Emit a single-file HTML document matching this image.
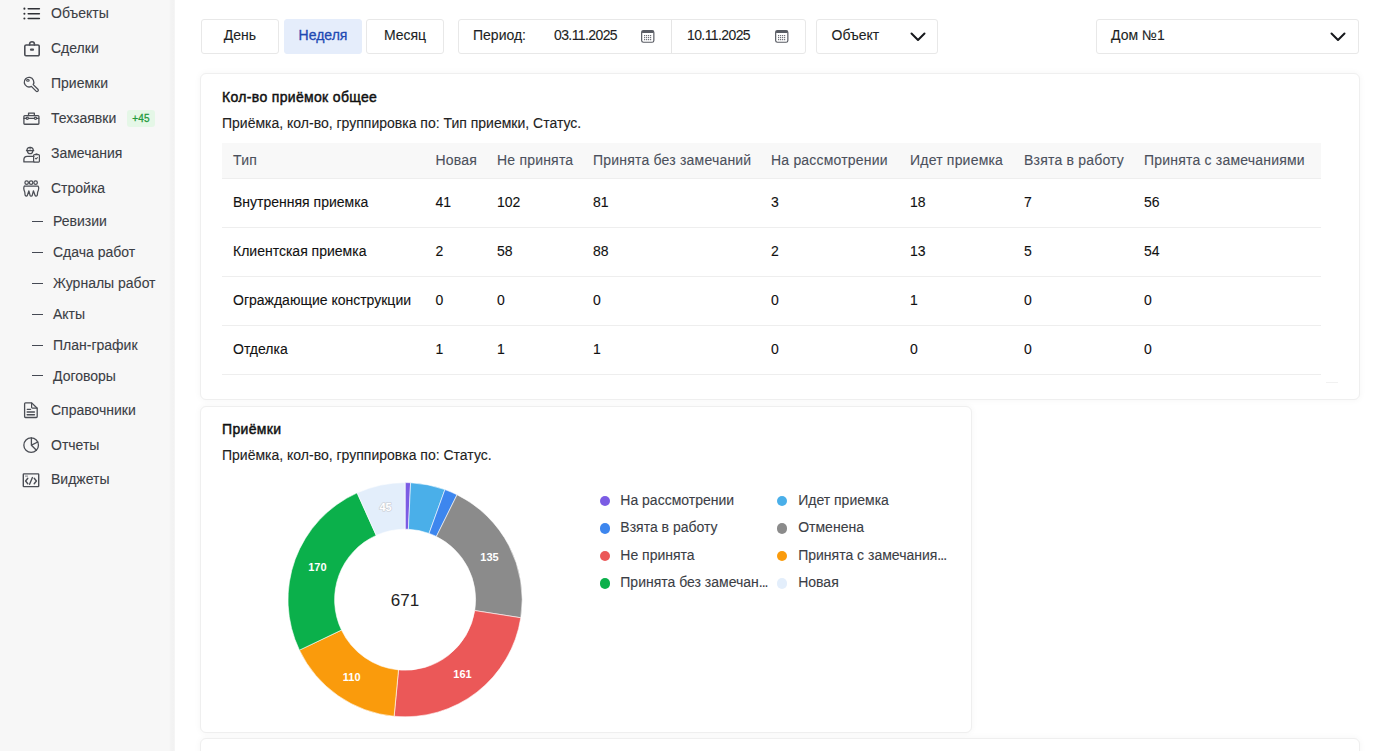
<!DOCTYPE html>
<html><head><meta charset="utf-8">
<style>
*{box-sizing:border-box;margin:0;padding:0}
html,body{width:1400px;height:751px;overflow:hidden;background:#fff;font-family:"Liberation Sans",sans-serif;color:#1d1f24}
#side{position:absolute;left:0;top:0;width:175px;height:751px;background:linear-gradient(to right,#f7f7f7 0,#f7f7f7 169px,#f3f3f3 171px,#f2f2f2 174px,#f8f8f8 175px)}
.t{position:absolute;font-size:14px;line-height:16px;white-space:nowrap;-webkit-text-stroke:0.1px currentColor}
.si{color:#3b3e45}
.ic{position:absolute;overflow:visible}
.dash{position:absolute;left:32px;width:11px;height:1px;background:#454954}
.box{position:absolute;top:19px;height:35px;border:1px solid #e8e8e8;border-radius:3px;background:#fff}
.btn{font-size:14px;line-height:33px;text-align:center;color:#1d1f24}
.card{position:absolute;background:#fff;border-radius:6px;border:1px solid #efefef;box-shadow:0 0 7px rgba(0,0,0,0.045)}
.title{font-weight:normal;color:#111;-webkit-text-stroke:0.45px #111;letter-spacing:0.33px}
.subt{color:#222}
.th{color:#4b505c;letter-spacing:0.2px}
.td{color:#111}
.rowline{position:absolute;left:222px;width:1099px;height:1px;background:#eeeeee}
.lg{color:#3b3e45}
.dot{position:absolute;width:10.5px;height:10.5px;border-radius:50%}
</style></head><body>
<div id="side"></div>
<div class="t si" style="left:51px;top:4.95px;">Объекты</div>
<div class="t si" style="left:51px;top:40.25px;">Сделки</div>
<div class="t si" style="left:51px;top:75.15px;">Приемки</div>
<div class="t si" style="left:51px;top:109.75px;">Техзаявки</div>
<div class="t si" style="left:51px;top:145.15px;">Замечания</div>
<div class="t si" style="left:51px;top:179.75px;">Стройка</div>
<div class="t si" style="left:51px;top:401.65px;">Справочники</div>
<div class="t si" style="left:51px;top:436.75px;">Отчеты</div>
<div class="t si" style="left:51px;top:470.75px;">Виджеты</div>
<div class="t si" style="left:53px;top:213.05px;">Ревизии</div>
<div class="dash" style="top:221px"></div>
<div class="t si" style="left:53px;top:244.05px;">Сдача работ</div>
<div class="dash" style="top:252px"></div>
<div class="t si" style="left:53px;top:275.05px;">Журналы работ</div>
<div class="dash" style="top:283px"></div>
<div class="t si" style="left:53px;top:306.35px;">Акты</div>
<div class="dash" style="top:314px"></div>
<div class="t si" style="left:53px;top:337.35px;">План-график</div>
<div class="dash" style="top:345px"></div>
<div class="t si" style="left:53px;top:367.95px;">Договоры</div>
<div class="dash" style="top:375px"></div>
<div style="position:absolute;left:127px;top:110px;width:28px;height:17px;border-radius:3px;background:#e5f7e7;"></div><div style="position:absolute;left:127px;top:110.3px;width:28px;height:17px;color:#1f9a3b;font-size:10px;line-height:17px;text-align:center;-webkit-text-stroke:0.3px #1f9a3b;letter-spacing:0.2px">+45</div>
<svg style="position:absolute;left:0;top:0" width="175" height="500"><circle cx="24.4" cy="8.65" r="1.05" fill="#2f3136"/><path d="M28.2 8.65H39.4" stroke="#2f3136" stroke-width="1.5" stroke-linecap="round"/><circle cx="24.4" cy="13.7" r="1.05" fill="#2f3136"/><path d="M28.2 13.7H39.4" stroke="#2f3136" stroke-width="1.5" stroke-linecap="round"/><circle cx="24.4" cy="18.5" r="1.05" fill="#2f3136"/><path d="M28.2 18.5H39.4" stroke="#2f3136" stroke-width="1.5" stroke-linecap="round"/><path d="M26.2 45H38a1.2 1.2 0 0 1 1.2 1.2v8.3a1.2 1.2 0 0 1-1.2 1.2H26a1.2 1.2 0 0 1-1.2-1.2v-8.3a1.4 1.4 0 0 1 1.4-1.2z" fill="none" stroke="#4b4e55" stroke-width="1.6" stroke-linecap="round" stroke-linejoin="round"/><path d="M29.6 44.9v-0.8a2.4 2.4 0 0 1 4.8 0v0.8" fill="none" stroke="#4b4e55" stroke-width="1.6" stroke-linecap="round" stroke-linejoin="round"/><path d="M31 49.7H33" fill="none" stroke="#4b4e55" stroke-width="2.2" stroke-linecap="round" stroke-linejoin="round"/><path d="M33.19 84.59A4.8 4.8 0 1 0 31.35 86.39L36.08 91.12A1.3 1.3 0 0 0 37.92 89.28Z" fill="none" stroke="#4b4e55" stroke-width="1.3" stroke-linecap="round" stroke-linejoin="round"/><ellipse cx="27.9" cy="80.4" rx="1.3" ry="0.9" fill="none" stroke="#4b4e55" stroke-width="1.1"/><path d="M24.9 115.65H38.1a0.8 0.8 0 0 1 0.8 0.8v7a0.8 0.8 0 0 1-0.8 0.8H24.7a0.8 0.8 0 0 1-0.8-0.8v-7a0.8 0.8 0 0 1 0.8-0.8z" fill="none" stroke="#4b4e55" stroke-width="1.3" stroke-linecap="round" stroke-linejoin="round"/><path d="M28.55 115.6V113.1H34.35V115.6" fill="none" stroke="#4b4e55" stroke-width="1.3" stroke-linecap="round" stroke-linejoin="round"/><path d="M23.9 118.3H26.2M28.4 118.3H34.4M36.6 118.3H38.9" fill="none" stroke="#4b4e55" stroke-width="1.2" stroke-linecap="round" stroke-linejoin="round"/><circle cx="27.3" cy="118.3" r="1.1" fill="none" stroke="#4b4e55" stroke-width="1.2"/><circle cx="35.5" cy="118.3" r="1.1" fill="none" stroke="#4b4e55" stroke-width="1.2"/><path d="M26.9 150.6a3.2 3.3 0 0 1 6.4 0" fill="none" stroke="#4b4e55" stroke-width="1.3" stroke-linecap="round" stroke-linejoin="round"/><path d="M26.5 150.7H33.7" fill="none" stroke="#4b4e55" stroke-width="1.3" stroke-linecap="round" stroke-linejoin="round"/><path d="M30.1 147.3V149" fill="none" stroke="#4b4e55" stroke-width="1.1" stroke-linecap="round" stroke-linejoin="round"/><path d="M27.6 151.2a2.5 2.5 0 0 0 5 0" fill="none" stroke="#4b4e55" stroke-width="1.3" stroke-linecap="round" stroke-linejoin="round"/><path d="M33.9 156.4H27.1a3.2 3.2 0 0 0-3.2 3.2V161.9H33.9" fill="none" stroke="#4b4e55" stroke-width="1.3" stroke-linecap="round" stroke-linejoin="round"/><path d="M34.4 154.6h4.2a0.8 0.8 0 0 1 0.8 0.8v5.9a0.8 0.8 0 0 1-0.8 0.8h-4.2a0.8 0.8 0 0 1-0.8-0.8v-5.9a0.8 0.8 0 0 1 0.8-0.8z" fill="none" stroke="#4b4e55" stroke-width="1.2" stroke-linecap="round" stroke-linejoin="round"/><path d="M35.6 154.4V153.9H37.4V154.4" fill="none" stroke="#4b4e55" stroke-width="1.0" stroke-linecap="round" stroke-linejoin="round"/><path d="M35.4 158.4l0.8 0.6l1.2-1.3" fill="none" stroke="#4b4e55" stroke-width="1.1" stroke-linecap="round" stroke-linejoin="round"/><circle cx="26.65" cy="182.7" r="1.75" fill="none" stroke="#4b4e55" stroke-width="1.25"/><circle cx="31.1" cy="182.7" r="1.75" fill="none" stroke="#4b4e55" stroke-width="1.25"/><circle cx="35.6" cy="182.7" r="1.75" fill="none" stroke="#4b4e55" stroke-width="1.25"/><path d="M24.5 186.1H38.1C39.2 187.5 38.6 190 37.6 192.2L37.3 195.2A1.2 1.2 0 0 1 35 195.3L33.4 190.8L32.3 195.2A1.2 1.2 0 0 1 30 195.2L28.9 190.8L27.4 195.3A1.2 1.2 0 0 1 25.1 195.2L24.8 192.2C23.8 190 23.3 187.5 24.5 185.9Z" fill="none" stroke="#4b4e55" stroke-width="1.25" stroke-linecap="round" stroke-linejoin="round"/><path d="M25.5 402.9H31.7L37.2 408.2V416.6a0.9 0.9 0 0 1-0.9 0.9H25.5a0.9 0.9 0 0 1-0.9-0.9V403.8a0.9 0.9 0 0 1 0.9-0.9z" fill="none" stroke="#4b4e55" stroke-width="1.3" stroke-linecap="round" stroke-linejoin="round"/><path d="M31.6 403.1V407.3a0.8 0.8 0 0 0 0.8 0.8H37" fill="none" stroke="#4b4e55" stroke-width="1.2" stroke-linecap="round" stroke-linejoin="round"/><path d="M27.2 409.3H30.6" fill="none" stroke="#4b4e55" stroke-width="1.2" stroke-linecap="round" stroke-linejoin="round"/><path d="M27.2 412H34.4M27.2 414.8H34.4" fill="none" stroke="#4b4e55" stroke-width="1.5" stroke-linecap="round" stroke-linejoin="round"/><circle cx="31.15" cy="445.15" r="7.3" fill="none" stroke="#4b4e55" stroke-width="1.3"/><path d="M31.4 437.9V445.2L36.4 450.3M31.4 445.2L37.8 442" fill="none" stroke="#4b4e55" stroke-width="1.3" stroke-linecap="round" stroke-linejoin="round"/><path d="M23.9 473.9H38.1a0.6 0.6 0 0 1 0.6 0.6V486a0.6 0.6 0 0 1-0.6 0.6H23.9a0.6 0.6 0 0 1-0.6-0.6V474.5a0.6 0.6 0 0 1 0.6-0.6z" fill="none" stroke="#4b4e55" stroke-width="1.4" stroke-linecap="round" stroke-linejoin="round"/><path d="M27.8 478.2L25.6 481L27.8 483.8M34.2 478.2L36.4 481L34.2 483.8M32.4 477.6L29.6 484.3" fill="none" stroke="#4b4e55" stroke-width="1.4" stroke-linecap="round" stroke-linejoin="round"/><path d="M25.4 476.1H27.6" fill="none" stroke="#4b4e55" stroke-width="0.7" stroke-linecap="round" stroke-linejoin="round"/></svg>
<div class="box" style="left:201px;width:78px"></div>
<div class="box" style="left:284px;width:78px;background:#e5edfb;border-color:#e5edfb"></div>
<div class="box" style="left:366px;width:78px"></div>
<div class="t" style="left:201px;width:78px;text-align:center;top:26.95px;color:#1d1f24">День</div>
<div class="t" style="left:284px;width:78px;text-align:center;top:26.95px;color:#2149b3;-webkit-text-stroke:0.3px #2149b3">Неделя</div>
<div class="t" style="left:366px;width:78px;text-align:center;top:26.95px;color:#1d1f24">Месяц</div>
<div class="box" style="left:458px;width:348px"></div>
<div style="position:absolute;left:671px;top:20px;width:1px;height:33px;background:#e5e5e5"></div>
<div class="t " style="left:473px;top:27.05px;color:#1d1f24">Период:</div>
<div class="t " style="left:554px;top:27.05px;color:#1d1f24;letter-spacing:-0.6px">03.11.2025</div>
<div class="t " style="left:687px;top:27.05px;color:#1d1f24;letter-spacing:-0.6px">10.11.2025</div>
<svg class="ic" style="left:641px;top:30px" width="15" height="13" viewBox="0 0 15 13"><rect x="0.65" y="0.65" width="12.2" height="11.6" rx="1.8" fill="#fff" stroke="#595c64" stroke-width="1.2"/><rect x="0.65" y="0.65" width="12.2" height="2.4" rx="1.2" fill="#595c64"/><rect x="3" y="5" width="1.2" height="1.2" fill="#6e7178"/><rect x="3" y="7" width="1.2" height="1.2" fill="#6e7178"/><rect x="3" y="9" width="1.2" height="1.2" fill="#6e7178"/><rect x="5" y="5" width="1.2" height="1.2" fill="#6e7178"/><rect x="5" y="7" width="1.2" height="1.2" fill="#6e7178"/><rect x="5" y="9" width="1.2" height="1.2" fill="#6e7178"/><rect x="7" y="5" width="1.2" height="1.2" fill="#6e7178"/><rect x="7" y="7" width="1.2" height="1.2" fill="#6e7178"/><rect x="7" y="9" width="1.2" height="1.2" fill="#6e7178"/><rect x="9" y="5" width="1.2" height="1.2" fill="#6e7178"/><rect x="9" y="7" width="1.2" height="1.2" fill="#6e7178"/><rect x="9" y="9" width="1.2" height="1.2" fill="#6e7178"/></svg>
<svg class="ic" style="left:775px;top:30px" width="15" height="13" viewBox="0 0 15 13"><rect x="0.65" y="0.65" width="12.2" height="11.6" rx="1.8" fill="#fff" stroke="#595c64" stroke-width="1.2"/><rect x="0.65" y="0.65" width="12.2" height="2.4" rx="1.2" fill="#595c64"/><rect x="3" y="5" width="1.2" height="1.2" fill="#6e7178"/><rect x="3" y="7" width="1.2" height="1.2" fill="#6e7178"/><rect x="3" y="9" width="1.2" height="1.2" fill="#6e7178"/><rect x="5" y="5" width="1.2" height="1.2" fill="#6e7178"/><rect x="5" y="7" width="1.2" height="1.2" fill="#6e7178"/><rect x="5" y="9" width="1.2" height="1.2" fill="#6e7178"/><rect x="7" y="5" width="1.2" height="1.2" fill="#6e7178"/><rect x="7" y="7" width="1.2" height="1.2" fill="#6e7178"/><rect x="7" y="9" width="1.2" height="1.2" fill="#6e7178"/><rect x="9" y="5" width="1.2" height="1.2" fill="#6e7178"/><rect x="9" y="7" width="1.2" height="1.2" fill="#6e7178"/><rect x="9" y="9" width="1.2" height="1.2" fill="#6e7178"/></svg>
<div class="box" style="left:816px;width:122px"></div>
<div class="t " style="left:831.5px;top:27.05px;color:#1d1f24">Объект</div>
<svg class="ic" style="left:909.5px;top:31.5px" width="16" height="10" viewBox="0 0 16 10" fill="none" stroke="#16181c" stroke-width="2" stroke-linecap="round" stroke-linejoin="round"><path d="M1.5 1.5L8 8l6.5-6.5"/></svg>
<div class="box" style="left:1096px;width:263px"></div>
<div class="t " style="left:1111px;top:27.05px;color:#1d1f24">Дом №1</div>
<svg class="ic" style="left:1329.5px;top:31.5px" width="16" height="10" viewBox="0 0 16 10" fill="none" stroke="#16181c" stroke-width="2" stroke-linecap="round" stroke-linejoin="round"><path d="M1.5 1.5L8 8l6.5-6.5"/></svg>
<div class="card" style="left:200px;top:73px;width:1160px;height:327px"></div>
<div class="t title" style="left:222px;top:88.95px;">Кол-во приёмок общее</div>
<div class="t subt" style="left:222px;top:114.95px;">Приёмка, кол-во, группировка по: Тип приемки, Статус.</div>
<div style="position:absolute;left:222px;top:143px;width:1099px;height:36px;background:#f8f8f8;border-bottom:1px solid #eeeeee"></div>
<div class="t th" style="left:233px;top:151.55px;">Тип</div>
<div class="t th" style="left:435.5px;top:151.55px;">Новая</div>
<div class="t th" style="left:497px;top:151.55px;">Не принята</div>
<div class="t th" style="left:593px;top:151.55px;">Принята без замечаний</div>
<div class="t th" style="left:771px;top:151.55px;">На рассмотрении</div>
<div class="t th" style="left:910px;top:151.55px;">Идет приемка</div>
<div class="t th" style="left:1024px;top:151.55px;">Взята в работу</div>
<div class="t th" style="left:1144px;top:151.55px;">Принята с замечаниями</div>
<div class="t td" style="left:233px;top:193.65px;">Внутренняя приемка</div>
<div class="t td" style="left:435.5px;top:193.65px;">41</div>
<div class="t td" style="left:497px;top:193.65px;">102</div>
<div class="t td" style="left:593px;top:193.65px;">81</div>
<div class="t td" style="left:771px;top:193.65px;">3</div>
<div class="t td" style="left:910px;top:193.65px;">18</div>
<div class="t td" style="left:1024px;top:193.65px;">7</div>
<div class="t td" style="left:1144px;top:193.65px;">56</div>
<div class="rowline" style="top:227px"></div>
<div class="t td" style="left:233px;top:242.65px;">Клиентская приемка</div>
<div class="t td" style="left:435.5px;top:242.65px;">2</div>
<div class="t td" style="left:497px;top:242.65px;">58</div>
<div class="t td" style="left:593px;top:242.65px;">88</div>
<div class="t td" style="left:771px;top:242.65px;">2</div>
<div class="t td" style="left:910px;top:242.65px;">13</div>
<div class="t td" style="left:1024px;top:242.65px;">5</div>
<div class="t td" style="left:1144px;top:242.65px;">54</div>
<div class="rowline" style="top:276px"></div>
<div class="t td" style="left:233px;top:291.65px;">Ограждающие конструкции</div>
<div class="t td" style="left:435.5px;top:291.65px;">0</div>
<div class="t td" style="left:497px;top:291.65px;">0</div>
<div class="t td" style="left:593px;top:291.65px;">0</div>
<div class="t td" style="left:771px;top:291.65px;">0</div>
<div class="t td" style="left:910px;top:291.65px;">1</div>
<div class="t td" style="left:1024px;top:291.65px;">0</div>
<div class="t td" style="left:1144px;top:291.65px;">0</div>
<div class="rowline" style="top:325px"></div>
<div class="t td" style="left:233px;top:340.65px;">Отделка</div>
<div class="t td" style="left:435.5px;top:340.65px;">1</div>
<div class="t td" style="left:497px;top:340.65px;">1</div>
<div class="t td" style="left:593px;top:340.65px;">1</div>
<div class="t td" style="left:771px;top:340.65px;">0</div>
<div class="t td" style="left:910px;top:340.65px;">0</div>
<div class="t td" style="left:1024px;top:340.65px;">0</div>
<div class="t td" style="left:1144px;top:340.65px;">0</div>
<div class="rowline" style="top:374px"></div>
<div style="position:absolute;left:1326px;top:382px;width:12px;height:1px;background:#f1f1f1"></div>
<div class="card" style="left:200px;top:406px;width:772px;height:327px"></div>
<div class="t title" style="left:222px;top:421.25px;">Приёмки</div>
<div class="t subt" style="left:222px;top:447.25px;">Приёмка, кол-во, группировка по: Статус.</div>
<svg style="position:absolute;left:0;top:0" width="1400" height="751"><path fill="#7b5ce4" stroke="#fff" stroke-width="0.6" stroke-linejoin="bevel" d="M405.10 482.60 A117.1 117.1 0 0 1 410.59 482.73 L408.40 529.28 A70.5 70.5 0 0 0 405.10 529.20 Z"/><path fill="#4aafe9" stroke="#fff" stroke-width="0.6" stroke-linejoin="bevel" d="M410.59 482.73 A117.1 117.1 0 0 1 444.92 489.58 L429.07 533.40 A70.5 70.5 0 0 0 408.40 529.28 Z"/><path fill="#3d86ee" stroke="#fff" stroke-width="0.6" stroke-linejoin="bevel" d="M444.92 489.58 A117.1 117.1 0 0 1 457.04 494.75 L436.37 536.51 A70.5 70.5 0 0 0 429.07 533.40 Z"/><path fill="#8b8b8b" stroke="#fff" stroke-width="0.6" stroke-linejoin="bevel" d="M457.04 494.75 A117.1 117.1 0 0 1 520.80 617.75 L474.76 610.57 A70.5 70.5 0 0 0 436.37 536.51 Z"/><path fill="#eb5858" stroke="#fff" stroke-width="0.6" stroke-linejoin="bevel" d="M520.80 617.75 A117.1 117.1 0 0 1 394.13 716.29 L398.50 669.89 A70.5 70.5 0 0 0 474.76 610.57 Z"/><path fill="#fa9b0c" stroke="#fff" stroke-width="0.6" stroke-linejoin="bevel" d="M394.13 716.29 A117.1 117.1 0 0 1 299.43 650.15 L341.48 630.08 A70.5 70.5 0 0 0 398.50 669.89 Z"/><path fill="#0bb04b" stroke="#fff" stroke-width="0.6" stroke-linejoin="bevel" d="M299.43 650.15 A117.1 117.1 0 0 1 357.14 492.87 L376.22 535.38 A70.5 70.5 0 0 0 341.48 630.08 Z"/><path fill="#e3eefb" stroke="#fff" stroke-width="0.6" stroke-linejoin="bevel" d="M357.14 492.87 A117.1 117.1 0 0 1 405.10 482.60 L405.10 529.20 A70.5 70.5 0 0 0 376.22 535.38 Z"/><text x="385.6" y="511.4" text-anchor="middle" font-family="Liberation Sans" font-weight="bold" font-size="11" fill="#fff" stroke="#c9ccd2" stroke-width="1.2" paint-order="stroke">45</text><text x="489.5" y="561.3" text-anchor="middle" font-family="Liberation Sans" font-weight="bold" font-size="11" fill="#fff">135</text><text x="462.5" y="678.3" text-anchor="middle" font-family="Liberation Sans" font-weight="bold" font-size="11" fill="#fff">161</text><text x="351.7" y="680.7" text-anchor="middle" font-family="Liberation Sans" font-weight="bold" font-size="11" fill="#fff">110</text><text x="317.4" y="571.0" text-anchor="middle" font-family="Liberation Sans" font-weight="bold" font-size="11" fill="#fff">170</text><text x="405" y="605.5" text-anchor="middle" font-family="Liberation Sans" font-size="17" fill="#222">671</text></svg>
<div class="dot" style="left:599.5px;top:495.6px;background:#7b5ce4"></div>
<div class="t lg" style="left:620.3px;top:491.95px;">На рассмотрении</div>
<div class="dot" style="left:776.9px;top:495.6px;background:#4aafe9"></div>
<div class="t lg" style="left:798.2px;top:491.95px;">Идет приемка</div>
<div class="dot" style="left:599.5px;top:523.1px;background:#3d86ee"></div>
<div class="t lg" style="left:620.3px;top:519.45px;">Взята в работу</div>
<div class="dot" style="left:776.9px;top:523.1px;background:#8b8b8b"></div>
<div class="t lg" style="left:798.2px;top:519.45px;">Отменена</div>
<div class="dot" style="left:599.5px;top:550.6px;background:#eb5858"></div>
<div class="t lg" style="left:620.3px;top:546.95px;">Не принята</div>
<div class="dot" style="left:776.9px;top:550.6px;background:#fa9b0c"></div>
<div class="t lg" style="left:798.2px;top:546.95px;">Принята с замечания<span style="letter-spacing:-1px">...</span></div>
<div class="dot" style="left:599.5px;top:578.1px;background:#0bb04b"></div>
<div class="t lg" style="left:620.3px;top:574.45px;">Принята без замечан<span style="letter-spacing:-1px">...</span></div>
<div class="dot" style="left:776.9px;top:578.1px;background:#e3eefb"></div>
<div class="t lg" style="left:798.2px;top:574.45px;">Новая</div>
<div class="card" style="left:200px;top:738px;width:1160px;height:40px"></div>
</body></html>
